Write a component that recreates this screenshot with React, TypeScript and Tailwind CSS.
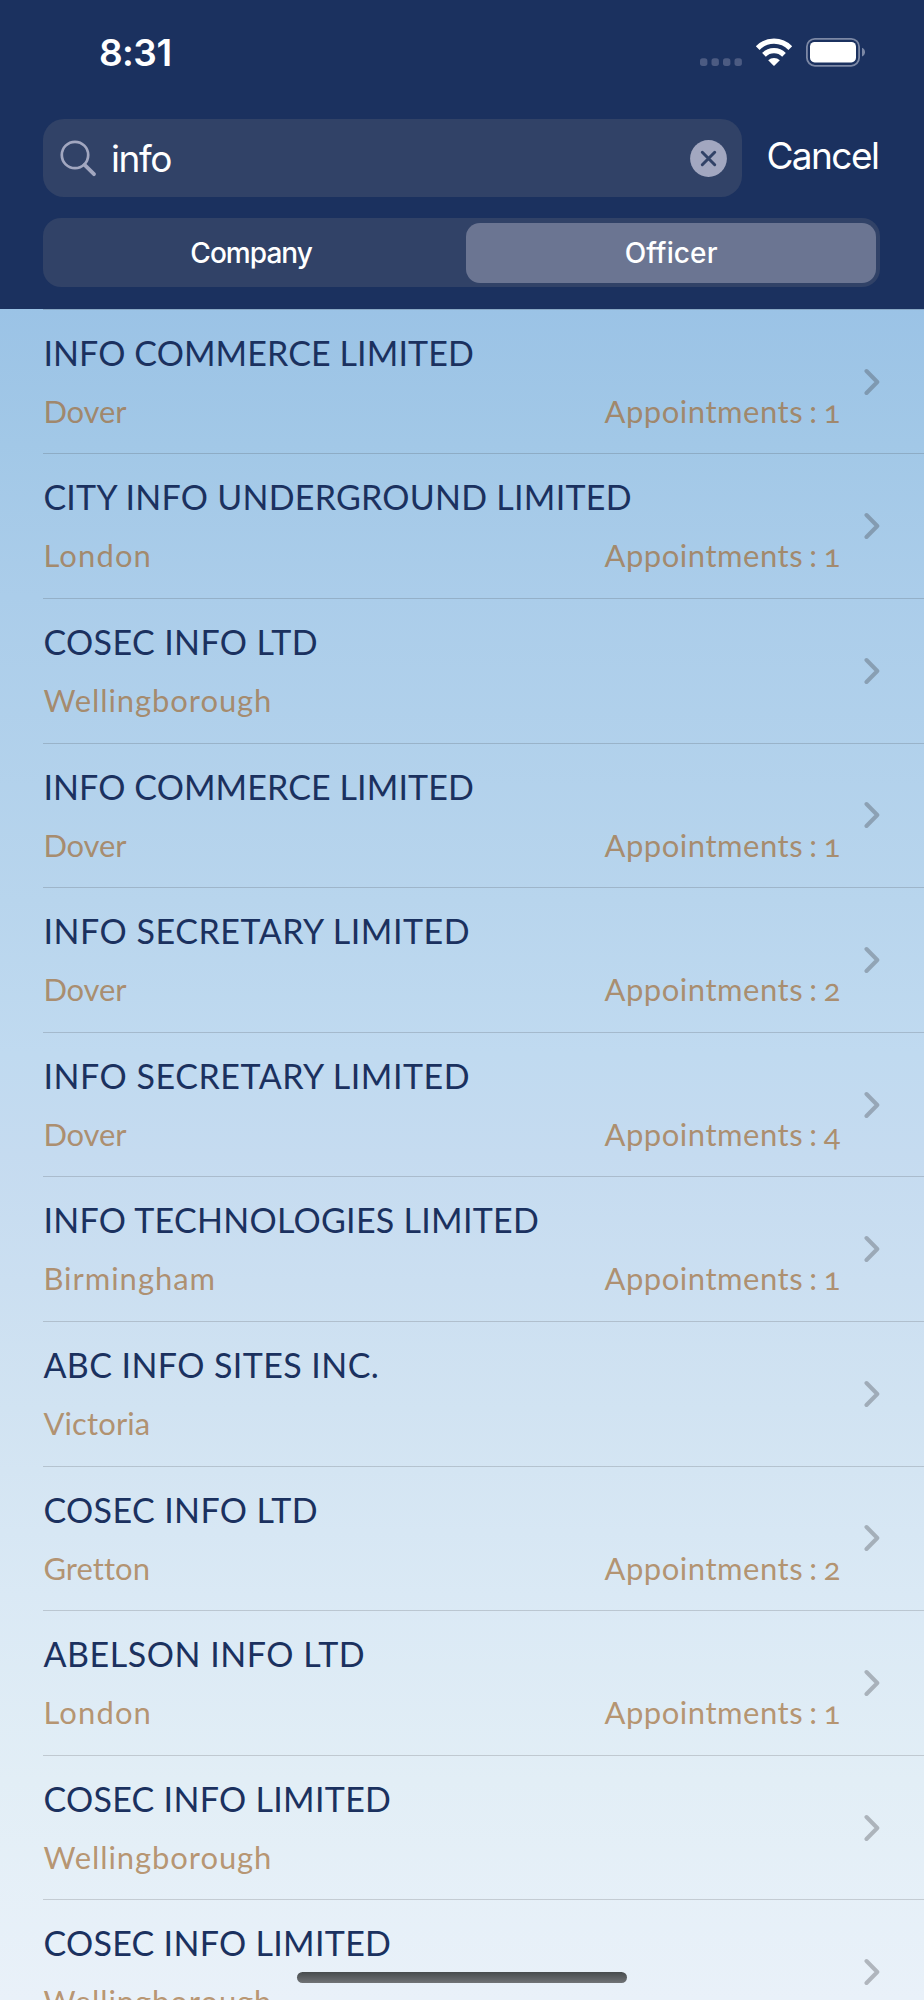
import React from 'react';

type Officer = {
  name: string;
  nameTracking: string;
  town: string;
  townTracking: string;
  appointments?: number;
};

const DOVER = 'tracking-[-0.15px]';
const LONDON = 'tracking-[1.12px]';
const WELLINGBOROUGH = 'tracking-[0.92px]';

const officers: Officer[] = [
  { name: 'INFO COMMERCE LIMITED', nameTracking: 'tracking-[0.1px]', town: 'Dover', townTracking: DOVER, appointments: 1 },
  { name: 'CITY INFO UNDERGROUND LIMITED', nameTracking: 'tracking-[0.25px]', town: 'London', townTracking: LONDON, appointments: 1 },
  { name: 'COSEC INFO LTD', nameTracking: 'tracking-[0.39px]', town: 'Wellingborough', townTracking: WELLINGBOROUGH },
  { name: 'INFO COMMERCE LIMITED', nameTracking: 'tracking-[0.1px]', town: 'Dover', townTracking: DOVER, appointments: 1 },
  { name: 'INFO SECRETARY LIMITED', nameTracking: 'tracking-[0.54px]', town: 'Dover', townTracking: DOVER, appointments: 2 },
  { name: 'INFO SECRETARY LIMITED', nameTracking: 'tracking-[0.54px]', town: 'Dover', townTracking: DOVER, appointments: 4 },
  { name: 'INFO TECHNOLOGIES LIMITED', nameTracking: 'tracking-[0.28px]', town: 'Birmingham', townTracking: 'tracking-[0.97px]', appointments: 1 },
  { name: 'ABC INFO SITES INC.', nameTracking: 'tracking-[0.42px]', town: 'Victoria', townTracking: 'tracking-[0.13px]' },
  { name: 'COSEC INFO LTD', nameTracking: 'tracking-[0.39px]', town: 'Gretton', townTracking: 'tracking-[0.05px]', appointments: 2 },
  { name: 'ABELSON INFO LTD', nameTracking: 'tracking-[0.55px]', town: 'London', townTracking: LONDON, appointments: 1 },
  { name: 'COSEC INFO LIMITED', nameTracking: 'tracking-[0.3px]', town: 'Wellingborough', townTracking: WELLINGBOROUGH },
  { name: 'COSEC INFO LIMITED', nameTracking: 'tracking-[0.3px]', town: 'Wellingborough', townTracking: WELLINGBOROUGH },
];

function StatusIcons() {
  return (
    <svg width="172" height="36" viewBox="0 0 172 36" fill="none">
      <g fill="#4c5b82">
        <rect x="4" y="24.3" width="7.4" height="7.6" rx="2.6" />
        <rect x="15.5" y="24.3" width="7.4" height="7.6" rx="2.6" />
        <rect x="27" y="24.3" width="7.4" height="7.6" rx="2.6" />
        <rect x="38.5" y="24.3" width="7.4" height="7.6" rx="2.6" />
      </g>
      <g stroke="#fff" strokeWidth="5.2">
        <path d="M61.7 14.1A22.7 22.7 0 0 1 94.3 14.1" />
        <path d="M68 20.8A14.2 14.2 0 0 1 88 20.8" />
      </g>
      <path d="M72.2 26.3A8.6 8.6 0 0 1 83.8 26.3L78.6 31.4Q78 31.9 77.4 31.4Z" fill="#fff" />
      <rect x="110.9" y="4.8" width="52.2" height="27" rx="8" stroke="#7c88a5" strokeWidth="1.8" />
      <rect x="114" y="8" width="46" height="20.4" rx="4.6" fill="#fff" />
      <path d="M166 13.8C168 14.8 169 16.3 169 18.2C169 20 168 21.7 166 22.6Z" fill="#7c88a5" />
    </svg>
  );
}

function Header() {
  return (
    <header className="flex h-[308.8px] shrink-0 flex-col bg-[#1b315f] pr-11 pl-[43.4px] font-[Inter,sans-serif] text-white">
      <div className="flex h-[119px] items-start justify-between pt-[34px] pr-3 pl-[55.5px]">
        <span className="text-[37px] leading-[38px] font-semibold tracking-[-0.5px]">8:31</span>
        <StatusIcons />
      </div>
      <div className="flex h-[78px] items-center">
        <div className="flex h-full w-[699px] items-center rounded-[21px] bg-[#314267] pr-[15px] pl-[16.5px]">
          <svg width="37" height="37" viewBox="0 0 37 37" fill="none" stroke="#a2a7c0" className="shrink-0">
            <circle cx="15" cy="15" r="13.2" strokeWidth="2.7" />
            <path d="M24.6 24.9L34 34.2" strokeWidth="3.8" strokeLinecap="round" />
          </svg>
          <span className="flex-1 pt-[2px] pl-[14px] text-[37px] leading-[44px] tracking-[-1.35px]">info</span>
          <svg width="37" height="37" viewBox="0 0 37 37" className="shrink-0">
            <circle cx="18.5" cy="18.5" r="18.4" fill="#a2a7c0" />
            <path d="M12.3 12.3L24.7 24.7M24.7 12.3L12.3 24.7" stroke="#314267" strokeWidth="3" strokeLinecap="round" />
          </svg>
        </div>
        <span className="pb-[4px] pl-[24px] text-[37px] leading-[44px] tracking-[-1.57px] whitespace-nowrap">Cancel</span>
      </div>
      <div className="mt-[21px] flex h-[69px] w-[837px] rounded-[18px] bg-[#314267] px-1 pt-[4.5px] pb-[4px] text-[28px] leading-[61px] font-medium">
        <div className="w-[418.5px] pr-[11px] text-center tracking-[-0.95px]">Company</div>
        <div className="flex-1 rounded-[14px] bg-[#6b7592] text-center tracking-[0.1px]">Officer</div>
      </div>
    </header>
  );
}

function OfficerRow({ officer }: { officer: Officer }) {
  return (
    <li className="ml-[43.4px] flex h-[144.6px] shrink-0 items-center border-t border-[#3c3c43]/20 pr-11">
      <div className="flex h-full flex-1 flex-col pt-[23px]">
        <div className={`text-[34px] leading-[40px] whitespace-nowrap text-[#1b315f] ${officer.nameTracking}`}>{officer.name}</div>
        <div className="mt-[20px] flex justify-between text-[31px] leading-[36px] text-[#a0682e]/68">
          <span className={officer.townTracking}>{officer.town}</span>
          {officer.appointments !== undefined && (
            <span className="-mr-[1px] tracking-[0.52px] oldstyle-nums [word-spacing:-2.3px]">Appointments : {officer.appointments}</span>
          )}
        </div>
      </div>
      <svg width="20" height="30" viewBox="0 0 20 30" fill="none" className="ml-[20px] shrink-0">
        <path d="M6.5 4L17.3 15L6.5 26" stroke="#3c3c43" strokeOpacity="0.33" strokeWidth="4" strokeLinecap="round" strokeLinejoin="round" />
      </svg>
    </li>
  );
}

export default function App() {
  return (
    <div className="relative flex h-[2000px] w-[924px] flex-col overflow-hidden">
      <Header />
      <ul className="flex flex-1 flex-col overflow-hidden bg-[linear-gradient(to_bottom,#9bc3e6_0%,#a2c8e7_8%,#abcdea_17%,#b8d5ed_35%,#c0daf0_44%,#c5dbf0_50%,#d1e3f2_65%,#dae9f5_76%,#e2eef6_87%,#e9f1f9_100%)] font-[Lato,sans-serif]">
        {officers.map((officer, i) => (
          <OfficerRow key={i} officer={officer} />
        ))}
      </ul>
      <div className="absolute bottom-[17px] left-[297px] h-[11.5px] w-[330px] rounded-full bg-linear-to-b from-[#484c4e] to-[#707376]" />
    </div>
  );
}
